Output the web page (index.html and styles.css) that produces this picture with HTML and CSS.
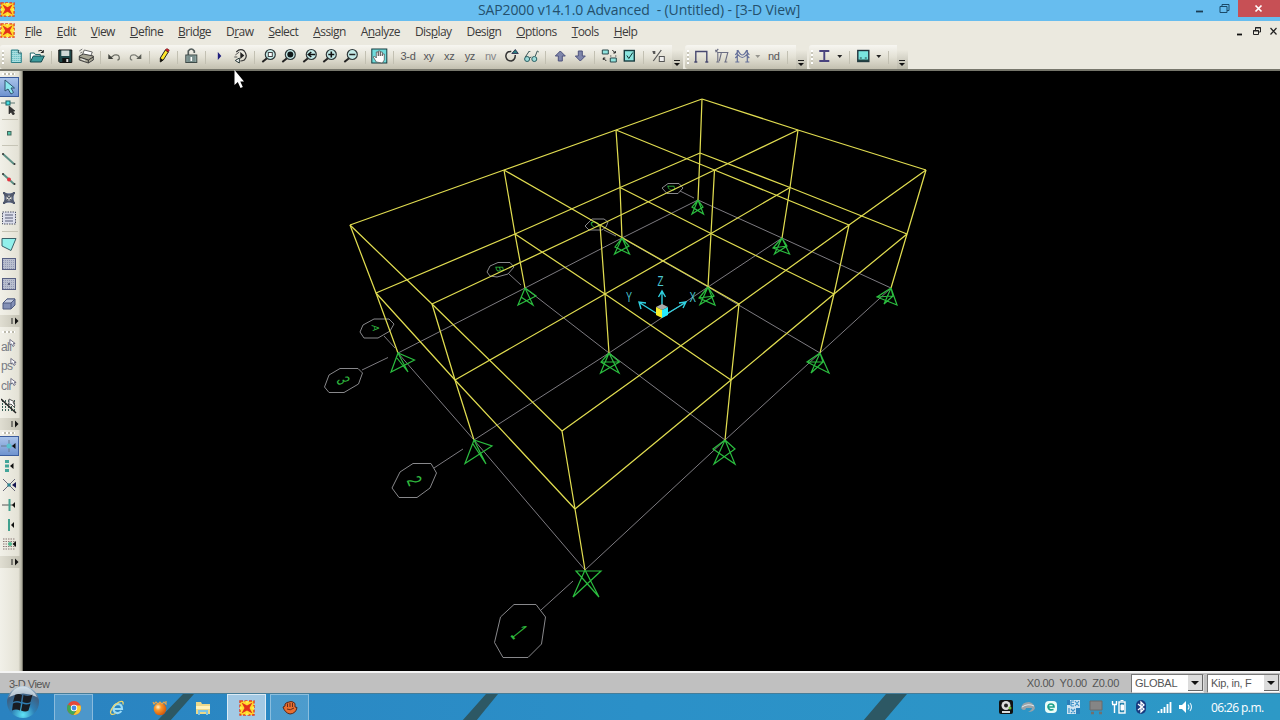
FILE: index.html
```html
<!DOCTYPE html>
<html lang="en">
<head>
    <meta charset="UTF-8">
    <meta name="viewport" content="width=device-width, initial-scale=1.0">
    <title>SAP2000 v14.1.0 Advanced - (Untitled) - [3-D View]</title>
    <link rel="stylesheet" href="styles.css">
</head>
<body>
    <!-- icon sprite -->
    <svg class="sprite" xmlns="http://www.w3.org/2000/svg">
        <defs>
            <pattern id="dots" width="2" height="2" patternUnits="userSpaceOnUse"><rect width="2" height="2" fill="#a9dfe0"/><rect width="1" height="1" fill="#5ab5bb"/></pattern>
            <pattern id="greydots" width="2" height="2" patternUnits="userSpaceOnUse"><rect width="2" height="2" fill="#b9bfce"/><rect width="1" height="1" fill="#9299b4"/></pattern>
            <radialGradient id="orb" cx=".5" cy=".9" r=".9"><stop offset="0" stop-color="#5fe4f7"/><stop offset=".4" stop-color="#2d7fb5"/><stop offset=".75" stop-color="#3f5f80"/><stop offset="1" stop-color="#b9cfdf"/></radialGradient>
            <radialGradient id="ball" cx=".35" cy=".35" r=".7"><stop offset="0" stop-color="#fff3d0"/><stop offset=".35" stop-color="#fb9a2c"/><stop offset="1" stop-color="#d25509"/></radialGradient>
        </defs>
        <symbol id="logo" viewBox="0 0 16 16"><rect x="1" y="1" width="14" height="14" fill="#ffd92e" stroke="#e33c1c" stroke-width="1.4" stroke-dasharray="3 1.5"/><path d="M2.500 2.500l5.500 3 5.500-3-3 5.500 3 5.500-5.500-3-5.500 3 3-5.500z" fill="#e3301a"/><path d="M1 6l3 2-3 2zM15 6l-3 2 3 2zM6 1l2 3 2-3zM6 15l2-3 2 3z" fill="#fff04a"/></symbol>
        <symbol id="new" viewBox="0 0 16 16"><path d="M3 2h7l3 3v9.500H3z" fill="url(#dots)" stroke="#2a8088"/><path d="M10 2v3h3" fill="#fff" stroke="#1a4a50"/></symbol>
        <symbol id="open" viewBox="0 0 16 16"><path d="M1 14V5h4l1 1.500h5V9" fill="#fff" stroke="#23696d"/><path d="M1 14l3-6h11l-3 6z" fill="#3c9a9c" stroke="#15494c"/><path d="M9 3q3-2 5 1m0-2v2.500h-2.500" fill="none" stroke="#222"/></symbol>
        <symbol id="save" viewBox="0 0 16 16"><path d="M1.500 2h13v12.500h-12l-1-1z" fill="#1f4648" stroke="#111"/><path d="M4 2.500h8V8H4z" fill="#cfd8d6"/><path d="M5 10h7v4H5z" fill="#111"/><path d="M9 11h2v3H9z" fill="#ddd"/></symbol>
        <symbol id="print" viewBox="0 0 16 16"><path d="M4 7l2-5 8 2-2 5z" fill="#fff" stroke="#444" stroke-width=".8"/><path d="M1 8l4-2 10 2v4l-5 3-9-3z" fill="#a7a594" stroke="#444"/><path d="M1 9l9 3 5-3M10 12v3" fill="none" stroke="#333"/><path d="M1 3l3-2m-2 4l2-1" stroke="#777"/><path d="M3 11l4 1.500" stroke="#eee"/></symbol>
        <symbol id="undo" viewBox="0 0 16 16"><path d="M4 10l4-3q5-1 5 3 0 2-2 2" fill="none" stroke="#66685f" stroke-width="1.200"/><path d="M2 6v5h5z" fill="#3e403b"/></symbol>
        <symbol id="redo" viewBox="0 0 16 16"><path d="M12 10L8 7Q3 6 3 10q0 2 2 2" fill="none" stroke="#777971" stroke-width="1.200"/><path d="M14 6v5H9z" fill="#5a5c55"/></symbol>
        <symbol id="pencil" viewBox="0 0 16 16"><path d="M5 10l5-8 3 2-5 8-3 2z" fill="#ffe62a" stroke="#222"/><path d="M10 2l1.500-1.500 2.500 1.500-1 2z" fill="#d5202a" stroke="#5e1212" stroke-width=".6"/><path d="M5 10v4l3-2z" fill="#111"/></symbol>
        <symbol id="lock" viewBox="0 0 16 16"><path d="M5 7V3q3-4 6 0v2" fill="none" stroke="#555e5c" stroke-width="1.700"/><rect x="2.500" y="7" width="11" height="7.500" fill="#93aaa7" stroke="#3d4947"/><path d="M4 9h8M4 11h8M4 13h8" stroke="#5e7371"/><path d="M7.200 9h1.600v4H7.200z" fill="#fff"/></symbol>
        <symbol id="run" viewBox="0 0 16 16"><path d="M5.500 4v8l3.500-4z" fill="#20207e"/></symbol>
        <symbol id="anim" viewBox="0 0 16 16"><path d="M4 4q4-4 8-1 4 5 0 9-2 1-4 1" fill="none" stroke="#333" stroke-width="1.200"/><path d="M3 7l4-3M2 9h3" fill="none" stroke="#555"/><path d="M8 4v7l4-3.500z" fill="#222"/><path d="M7 10v5l-4-2.500z" fill="#fff" stroke="#233"/></symbol>
        <symbol id="lens" viewBox="0 0 16 16"><path d="M6 10l-5 4" stroke="#222" stroke-width="2"/><circle cx="9" cy="6.500" r="5" fill="#c3eae8" stroke="#30393a" stroke-width="1.200"/></symbol>
        <symbol id="pan" viewBox="0 0 16 16"><rect x=".5" y="1" width="15" height="14" fill="#6fdcdc" stroke="#163b3f"/><path d="M5 14L2 9l1-1 2 2V4h2v4-5h2v5-4h2v4-2h2v6l-2 3z" fill="#fff" stroke="#555" stroke-width=".8"/></symbol>
        <symbol id="rotate" viewBox="0 0 16 16"><path d="M8 3.500Q3 3 2.500 8q.5 5 5.500 5 4-1 4-6" fill="none" stroke="#333" stroke-width="1.500"/><path d="M8.500 5.500H15L12 1.500z" fill="#2c7d80" stroke="#224" stroke-width=".8"/></symbol>
        <symbol id="glasses" viewBox="0 0 16 16"><circle cx="3.800" cy="11" r="2.500" fill="#9edbd9" stroke="#285e62"/><circle cx="11" cy="11" r="2.500" fill="#9edbd9" stroke="#285e62"/><path d="M6 10l2-1M2 9l4-6 1 1M12 8l2-5 1.500 1" fill="none" stroke="#3c5557"/></symbol>
        <symbol id="up" viewBox="0 0 16 16"><path d="M8 3l5 5h-3v5H6V8H3z" fill="#7f86ab" stroke="#4e537d"/></symbol>
        <symbol id="down" viewBox="0 0 16 16"><path d="M8 13l5-5h-3V3H6v5H3z" fill="#7f86ab" stroke="#4e537d"/></symbol>
        <symbol id="shrink" viewBox="0 0 16 16"><path d="M1 2h6v4H1zM9 10h6v4H9z" fill="#90e4de" stroke="#2b494c"/><path d="M11 2l3 3m0-2v2h-2M5 13l-3-3m0 2v-2h2M9 8h1m4 0h1" fill="none" stroke="#222"/></symbol>
        <symbol id="check" viewBox="0 0 16 16"><rect x="3" y="2.500" width="10" height="10.500" fill="#8be5df" stroke="#173c40" stroke-width="1.400"/><path d="M5.500 7.500l2 3 4-6" fill="none" stroke="#133"/></symbol>
        <symbol id="objopt" viewBox="0 0 16 16"><path d="M3 13L11 2" stroke="#555" stroke-width="1.200"/><path d="M2 3h3v3H3" fill="#555"/><rect x="9" y="8.500" width="5" height="5" fill="#eee" stroke="#555"/></symbol>
        <symbol id="frame" viewBox="0 0 16 16"><path d="M1 14h3M2.500 14V3.500h11V14M12 14h3" fill="none" stroke="#47486f" stroke-width="1.400"/></symbol>
        <symbol id="frame2" viewBox="0 0 16 16"><path d="M2 14h3M3.500 14V4.500h10L11 14M1 2l3 3m0-4L1 4M5 13L7 5M10 14h3" fill="none" stroke="#6c6e83" stroke-width="1.100"/></symbol>
        <symbol id="frame3" viewBox="0 0 16 16"><path d="M3 14V2m10 12V2M1 14h4m6 0h4M1 7l3-4q4 8 8 0l3 4M1 10l3-3q4 5 8 0l3 3" fill="none" stroke="#65709a" stroke-width="1.200"/></symbol>
        <symbol id="ibeam" viewBox="0 0 16 16"><path d="M2 3h10M2 13h10M7 3v10" fill="none" stroke="#49437e" stroke-width="1.900"/></symbol>
        <symbol id="area" viewBox="0 0 16 16"><rect x="1.500" y="2.500" width="11" height="11" fill="#79e4df" stroke="#20323c" stroke-width="1.400"/><path d="M1.500 12.500h11" stroke="#244" stroke-width="2"/><path d="M3.500 10h2M8.500 10h2" stroke="#244"/></symbol>
        <symbol id="drop" viewBox="0 0 8 16"><path d="M1 7h5l-2.500 3z" fill="#222"/></symbol>
        <symbol id="chevron" viewBox="0 0 8 8"><path d="M1 1.500h6" stroke="#222"/><path d="M1 4h6L4 7z" fill="#111"/></symbol>
        <!-- side bar -->
        <symbol id="pointer" viewBox="0 0 16 16"><path d="M4 1v11l3-2 3 5 2.500-1.500L10 9h3.500z" fill="#8be8ee" stroke="#31536f"/></symbol>
        <symbol id="reshape" viewBox="0 0 16 16"><path d="M0 4h14" stroke="#5b7770"/><rect x="5" y="2" width="4" height="4" fill="#47dde0" stroke="#186065"/><path d="M8 7v8l2-2 2 3 1.500-1L12 12h2z" fill="#333" stroke="#222" stroke-width=".6"/></symbol>
        <symbol id="point" viewBox="0 0 16 16"><rect x="6.500" y="6.500" width="3.500" height="3.500" fill="#55c5ad" stroke="#44695d"/></symbol>
        <symbol id="line" viewBox="0 0 16 16"><path d="M2 3l11 10" stroke="#5d8f85" stroke-width="2"/><circle cx="2" cy="3" r="1" fill="#333"/><circle cx="13.500" cy="13" r="1" fill="#333"/></symbol>
        <symbol id="brace" viewBox="0 0 16 16"><path d="M3 3l10 10m0-10L3 13M4 3q4 4 8 0M4 13q4-4 8 0M3 4q4 4 0 8M13 4q-4 4 0 8" fill="#8b96b1" stroke="#50586c" stroke-width="1.300"/><path d="M2 2h2v2H2zM12 2h2v2h-2zM2 12h2v2H2zM12 12h2v2h-2z" fill="#50586c"/></symbol>
        <symbol id="secondary" viewBox="0 0 16 16"><rect x="1.500" y="2" width="13" height="12" fill="#dcdeeb" stroke="#4e5366" stroke-dasharray="1.500 1"/><path d="M4 5h8M4 8h8M4 11h8" stroke="#555b74"/></symbol>
        <symbol id="poly" viewBox="0 0 16 16"><path d="M1 2.500h14l-5 12-9-4.500z" fill="#91f0eb" stroke="#395f68"/></symbol>
        <symbol id="rect" viewBox="0 0 16 16"><rect x="1.500" y="2.500" width="13" height="11" fill="url(#greydots)" stroke="#565e82"/></symbol>
        <symbol id="cube" viewBox="0 0 16 16"><path d="M2 7l4-4h8v6l-4 4H2z" fill="#8390b6" stroke="#4e5a80"/><path d="M2 7l4-4h8l-4 4z" fill="#c2cadf" stroke="#4e5a80"/><path d="M10 7v6" stroke="#4e5a80"/></symbol>
        <symbol id="cursor-sm" viewBox="0 0 8 10"><path d="M1 1v6l2-1 1.500 3L6 8 5 5.500h2z" fill="#fff" stroke="#50506c" stroke-width=".9"/></symbol>
        <symbol id="inter" viewBox="0 0 16 16"><path d="M1.500 2v12M4.500 2v12M7.500 2v12M10.500 2v12M13.500 2v12" stroke="#375f56" stroke-dasharray="2 1"/><path d="M0 1l15 14" stroke="#222" stroke-width="1.500"/><path d="M8 1v6l2-1 3 3 1-1-2-4h2z" fill="#fff" stroke="#555"/></symbol>
        <symbol id="overflow" viewBox="0 0 8 8"><path d="M1 1v6" stroke="#222"/><path d="M4 .5l3.500 3.500L4 7.500z" fill="#111"/></symbol>
    </svg>

    <header class="titlebar">
        <svg class="app-icon"><use href="#logo"/></svg>
        <span class="title">SAP2000 v14.1.0 Advanced &nbsp;- (Untitled) - [3-D View]</span>
        <div class="window-buttons">
            <svg width="12" height="12"><path d="M1 8.500h7" stroke="#1b3d55" stroke-width="1.800"/></svg>
            <svg width="12" height="12"><path d="M1 3.500h7v6H1zM3 3.500v-2h7v6H8" fill="none" stroke="#1b4a68"/></svg>
            <span class="close"><svg width="10" height="10"><path d="M1.500 1.500l6 6m0-6l-6 6" stroke="#fff" stroke-width="1.700"/></svg></span>
        </div>
    </header>

    <nav class="menubar">
        <svg class="app-icon"><use href="#logo"/></svg>
        <span class="menu"><u>F</u>ile</span>
        <span class="menu"><u>E</u>dit</span>
        <span class="menu"><u>V</u>iew</span>
        <span class="menu"><u>D</u>efine</span>
        <span class="menu"><u>B</u>ridge</span>
        <span class="menu">D<u>r</u>aw</span>
        <span class="menu"><u>S</u>elect</span>
        <span class="menu"><u>A</u>ssign</span>
        <span class="menu">A<u>n</u>alyze</span>
        <span class="menu">Dis<u>p</u>lay</span>
        <span class="menu">Desi<u>g</u>n</span>
        <span class="menu"><u>O</u>ptions</span>
        <span class="menu"><u>T</u>ools</span>
        <span class="menu"><u>H</u>elp</span>
        <div class="mdi-buttons">
            <svg width="10" height="10"><path d="M2 8.500h5" stroke="#111" stroke-width="1.800"/></svg>
            <svg width="10" height="10"><path d="M1.500 4.500h5v4h-5zM3.500 4V1.500h5V6H7M3 2h6M1 5h6" fill="none" stroke="#222"/></svg>
            <svg width="10" height="10"><path d="M1.500 2l6 6.500m0-6.500l-6 6.500" stroke="#222" stroke-width="1.200"/></svg>
        </div>
    </nav>

    <div class="toolbars">
        <div class="toolbar">
            <i class="grip"></i>
            <svg class="tool"><use href="#new"/></svg>
            <svg class="tool"><use href="#open"/></svg>
            <i class="sep"></i>
            <svg class="tool"><use href="#save"/></svg>
            <svg class="tool"><use href="#print"/></svg>
            <i class="sep"></i>
            <svg class="tool"><use href="#undo"/></svg>
            <svg class="tool"><use href="#redo"/></svg>
            <i class="sep"></i>
            <svg class="tool"><use href="#pencil"/></svg>
            <i class="sep"></i>
            <svg class="tool"><use href="#lock"/></svg>
            <i class="sep"></i>
            <svg class="tool"><use href="#run"/></svg>
            <svg class="tool"><use href="#anim"/></svg>
            <i class="sep"></i>
            <svg class="tool" viewBox="0 0 16 16"><use href="#lens"/><rect x="7" y="4.500" width="4" height="4" fill="#fff" stroke="#444"/></svg>
            <svg class="tool" viewBox="0 0 16 16"><use href="#lens"/><circle cx="9" cy="6.500" r="3" fill="#101818"/></svg>
            <svg class="tool" viewBox="0 0 16 16"><use href="#lens"/><path d="M6 6.500h7M9 4L6 6.500 9 9" fill="none" stroke="#111" stroke-width="1.500"/></svg>
            <svg class="tool" viewBox="0 0 16 16"><use href="#lens"/><path d="M6 6.500h6M9 3.500v6" stroke="#111" stroke-width="1.600"/></svg>
            <svg class="tool" viewBox="0 0 16 16"><use href="#lens"/><path d="M6 6.500h6" stroke="#222" stroke-width="1.500"/></svg>
            <i class="sep"></i>
            <svg class="tool"><use href="#pan"/></svg>
            <i class="sep"></i>
            <span class="tool">3-d</span>
            <span class="tool">xy</span>
            <span class="tool">xz</span>
            <span class="tool">yz</span>
            <span class="tool dim">nv</span>
            <svg class="tool"><use href="#rotate"/></svg>
            <svg class="tool"><use href="#glasses"/></svg>
            <i class="sep"></i>
            <svg class="tool"><use href="#up"/></svg>
            <svg class="tool"><use href="#down"/></svg>
            <i class="sep"></i>
            <svg class="tool"><use href="#shrink"/></svg>
            <svg class="tool"><use href="#check"/></svg>
            <i class="sep"></i>
            <svg class="tool"><use href="#objopt"/></svg>
            <span class="more"><svg><use href="#chevron"/></svg></span>
        </div>
        <div class="toolbar">
            <i class="grip"></i>
            <svg class="tool"><use href="#frame"/></svg>
            <svg class="tool"><use href="#frame2"/></svg>
            <svg class="tool"><use href="#frame3"/></svg>
            <svg class="drop off"><use href="#drop"/></svg>
            <span class="tool">nd</span>
            <i class="sep"></i>
            <span class="more"><svg><use href="#chevron"/></svg></span>
        </div>
        <div class="toolbar">
            <i class="grip"></i>
            <svg class="tool"><use href="#ibeam"/></svg>
            <svg class="drop"><use href="#drop"/></svg>
            <i class="sep"></i>
            <svg class="tool"><use href="#area"/></svg>
            <svg class="drop"><use href="#drop"/></svg>
            <i class="sep"></i>
            <span class="more"><svg><use href="#chevron"/></svg></span>
        </div>
    </div>

    <main class="workspace">
        <aside class="sidebar">
            <div class="side-group">
                <i class="hgrip"></i>
                <span class="side on"><svg><use href="#pointer"/></svg></span>
                <span class="side"><svg><use href="#reshape"/></svg></span>
                <i class="hsep"></i>
                <span class="side"><svg><use href="#point"/></svg></span>
                <i class="hsep"></i>
                <span class="side"><svg><use href="#line"/></svg></span>
                <span class="side"><svg viewBox="0 0 16 16"><use href="#line"/><circle cx="8" cy="8.500" r="2" fill="#e2333f"/></svg></span>
                <span class="side"><svg><use href="#brace"/></svg></span>
                <span class="side"><svg><use href="#secondary"/></svg></span>
                <i class="hsep"></i>
                <span class="side"><svg><use href="#poly"/></svg></span>
                <span class="side"><svg><use href="#rect"/></svg></span>
                <span class="side"><svg viewBox="0 0 16 16"><use href="#rect"/><path d="M7 8h2" stroke="#444a6a" stroke-width="1.500"/></svg></span>
                <span class="side"><svg><use href="#cube"/></svg></span>
                <span class="side-more"><svg><use href="#overflow"/></svg></span>
            </div>
            <div class="side-group select-group">
                <i class="hgrip"></i>
                <span class="side word">all<svg class="mini"><use href="#cursor-sm"/></svg></span>
                <span class="side word">ps<svg class="mini"><use href="#cursor-sm"/></svg></span>
                <span class="side word">clr<svg class="mini"><use href="#cursor-sm"/></svg></span>
                <span class="side"><svg><use href="#inter"/></svg></span>
                <span class="side-more"><svg><use href="#overflow"/></svg></span>
            </div>
            <div class="side-group snap-group">
                <i class="hgrip"></i>
                <span class="side on"><svg viewBox="0 0 16 16"><path d="M0 8h14M8 2v12" stroke="#667b8e"/><circle cx="8" cy="8" r="2.500" fill="#58c3cf"/><path d="M14.500 5v6L11 8z" fill="#111"/></svg></span>
                <span class="side"><svg viewBox="0 0 16 16"><path d="M6 2v12" stroke="#42a59a" stroke-width="4" stroke-dasharray="3 1.500"/><path d="M12.500 5v6L9 8z" fill="#111"/></svg></span>
                <span class="side"><svg viewBox="0 0 16 16"><path d="M2 2l12 12M2 14L14 2" stroke="#667"/><circle cx="8" cy="8" r="1.800" fill="#2f8592"/><path d="M15 5v6l-4-3z" fill="#151550"/></svg></span>
                <span class="side"><svg viewBox="0 0 16 16"><path d="M1 8h13" stroke="#555"/><path d="M8.500 2v12" stroke="#42a08e" stroke-width="2"/><path d="M14 5v6l-3-3z" fill="#111"/></svg></span>
                <span class="side"><svg viewBox="0 0 16 16"><path d="M8 2v12" stroke="#42a08e" stroke-width="2"/><path d="M13 5v6l-3-3z" fill="#111"/></svg></span>
                <span class="side"><svg viewBox="0 0 16 16"><path d="M2 3h12M2 5.500h12M2 8h12M2 10.500h12M2 13h12" stroke="#8b7876" stroke-dasharray="1.500 1"/><circle cx="9" cy="8" r="2" fill="#51b890"/><path d="M15 5v6l-3.500-3z" fill="#111"/></svg></span>
                <span class="side-more"><svg><use href="#overflow"/></svg></span>
            </div>
        </aside>

        <svg class="view3d" viewBox="23 71 1257 600" width="1257" height="600">
            <!-- ground grid -->
            <g class="grid">
                <path d="M398 353L525 288 622 238 698 200M474 440L609 353 708 287 782 238M585 570L725 440 820 353 891 288"/>
                <path d="M398 353L474 440 585 570M525 288L609 353 725 440M622 238L708 287 820 353M698 200L782 238 891 288"/>
                <path d="M541 610L573 581M434 468L463 449M362 370L388 357.500M384 336L395 348M509 274L521 285M604 230L616 236M680 191L694 198"/>
            </g>
            <!-- grid bubbles -->
            <g class="bubbles">
                <path d="M514 604.500H536L545.500 617 541.500 644 528 657.500H503L494.500 642.500 500.500 617z"/>
                <path d="M413 463.500H431L436.500 473 430 488 417 497.500H399L392 488 400 472z"/>
                <path d="M340 368.500H358L362.500 373 358.500 384 344 392.500H329L324.500 387 329 375z"/>
                <path d="M374 319H389L394 324 390 331 378 338H364L360 332 363 325z"/>
                <path d="M498 262.500H510L514 267 508 274 497 277 490 276 487 272 490 266z"/>
                <path d="M592 219H604L608 222 606 227 602 230H589L585 226z"/>
                <path d="M668 183.500H679L683 188 678 193.500H667L662 188z"/>
            </g>
            <g class="labels">
                <text transform="matrix(.7 .85 -2.100 1.700 510 635.500)">1</text>
                <text transform="matrix(.5 1.200 -1.900 .9 406.500 480.500)">2</text>
                <text transform="matrix(.5 1 -1.700 .8 336 380.500)">3</text>
                <text transform="matrix(.2 .9 -1 0 371.500 325)">A</text>
                <text transform="matrix(.3 .9 -1.100 0 495 266)">B</text>
                <text transform="matrix(.3 .9 -1.100 0 590 221)">C</text>
                <text transform="matrix(.3 .8 -1 0 667 185)">D</text>
            </g>
            <!-- frame members -->
            <g class="members">
                <path d="M350 225L504 170 616 130 702 99M432 304L600 225 714.500 170 798 130M562 431L739 304 849 225 926 170"/>
                <path d="M350 225L432 304 562 431M504 170L600 225 739 304M616 130L714.500 170 849 225M702 99L798 130 926 170"/>
                <path d="M376 293L515 234 620 187.500 700 153M455 380L605 294 711 233.500 790 187.500M575 509L731 380 834 294 907 234"/>
                <path d="M376 293L455 380 575 509M515 234L605 294 731 380M620 187.500L711 233.500 834 294M700 153L790 187.500 907 234"/>
                <path d="M350 225L376 293 398 353M504 170L515 234 525 288M616 130L620 187.500 622 238M702 99L700 153 698 200"/>
                <path d="M432 304L455 380 474 440M600 225L605 294 609 353M714.500 170L711 233.500 708 287M798 130L790 187.500 782 238"/>
                <path d="M562 431L575 509 585 570M739 304L731 380 725 440M849 225L834 294 820 353M926 170L907 234 891 288"/>
            </g>
            <!-- restraints -->
            <g class="supports">
                <path d="M585 570L573 597 601 571H576L599 597 585 570"/>
                <path d="M474 440L465 463.500 492 446 474 440 486 464 473 444"/>
                <path d="M725 440L714 464 735 449 725 440 735 464 713 449 725 440"/>
                <path d="M398 353L391 372 414.500 360 398 353 408 372 397 358"/>
                <path d="M609 353L600.500 373 619.500 362 609 353 619 373 601 362 609 353M601 362H619"/>
                <path d="M820 353L811 373 823 362 820 353 829 373 807 362 820 353M807 362H823"/>
                <path d="M525 288L518 305 536 296 525 288 533 305 521 297"/>
                <path d="M708 287L700 304.500 714 296 708 287 715 305 699 298 708 287M699 298L714 296"/>
                <path d="M891 288L884 304 893 296 891 288 897 305 877 297 891 288M877 297L893 296"/>
                <path d="M622 238L614.500 254 629 246 622 238 629.500 254 615 247 622 238"/>
                <path d="M782 238L774.500 254 787 246 782 238 789.500 254 773 248 782 238M773 248L787 246"/>
                <path d="M698 200L692 214 703 207 698 200 703.500 214 692 207z"/>
            </g>
            <!-- axis triad -->
            <g class="axes">
                <path d="M662 305V292M658.500 297L662 291 665.500 297M656 313L640 303M641 309L639 302 646 303M668 313L685 303M679 303L686 302 683 308"/>
                <path d="M656 307L662 304 668 307 662 310z" fill="#aaa" stroke="none"/>
                <path d="M656 307L662 310V318L656 315z" fill="#f8ef2b" stroke="none"/>
                <path d="M668 307L662 310V318L668 315z" fill="#27eafa" stroke="none"/>
                <text x="657.500" y="286" textLength="6" lengthAdjust="spacingAndGlyphs">Z</text>
                <text x="626" y="302" textLength="6" lengthAdjust="spacingAndGlyphs">Y</text>
                <text x="689.500" y="302" textLength="6.500" lengthAdjust="spacingAndGlyphs">X</text>
            </g>
        </svg>
    </main>

    <footer class="statusbar">
        <span class="view-name">3-D View</span>
        <span class="coords">X0.00 &nbsp;Y0.00 &nbsp;Z0.00</span>
        <span class="combo">GLOBAL<b><svg width="8" height="6"><path d="M0 1h8L4 5z" fill="#111"/></svg></b></span>
        <span class="combo">Kip, in, F<b><svg width="8" height="6"><path d="M0 1h8L4 5z" fill="#111"/></svg></b></span>
    </footer>

    <div class="taskbar">
        <svg class="streaks" viewBox="0 0 1280 27"><path d="M183 0h11l-24 27h-13zM486 0h12l-22 27h-14zM886 0h21l-23 27h-21z"/></svg>
        <svg class="start" viewBox="0 0 34 34"><circle cx="17" cy="17" r="16" fill="url(#orb)"/><path d="M3 12Q8 1 17 1.500T31 12Q17 5 3 12z" fill="#dfe8ee" opacity=".75"/><path d="M9 10q4-2 7 0l-1 7q-4-2-8 0zM17.500 10q5 2 9-.5l-2 7.500q-3 2-8 0zM7 18.500q4-2 8 0l-1 7q-4-2-8 0zM16.500 18.500q4 2 8 0l-2 7q-3 2-7.500 0z" fill="#181c22"/></svg>
        <div class="apps">
            <span class="task open"><svg viewBox="0 0 16 16"><circle cx="8" cy="8" r="7" fill="#e4473a"/><path d="M8 8L2 4.500A7 7 0 0 0 7.500 15L10 11z" fill="#3fa756"/><path d="M8 8l2.500 3-3 4A7 7 0 0 0 14.500 5.500H8z" fill="#f6cd34"/><circle cx="8" cy="8" r="3.200" fill="#fff"/><circle cx="8" cy="8" r="2.400" fill="#4688e8"/></svg></span>
            <span class="task"><svg viewBox="0 0 16 16"><path d="M4.500 9h8.500Q13 4 8.800 4 4.500 4.500 4.300 9q1 4.500 5 4 2-.5 3-2" fill="none" stroke="#9cdcf7" stroke-width="2.200"/><path d="M14 4.500Q15 0 10 2 3 6 1.500 12q0 4 5 1.500" fill="none" stroke="#f1d76a" stroke-width="1.300"/></svg></span>
            <span class="task"><svg viewBox="0 0 16 16"><circle cx="8" cy="9" r="6.300" fill="url(#ball)"/><path d="M1 2l1 2 2-2 2 2 2-2 2 2 2-2 2 2V1" fill="none" stroke="#e9a44a" stroke-width="1.200"/></svg></span>
            <span class="task"><svg viewBox="0 0 16 16"><path d="M1 2h5l1 2h8v10H1z" fill="#ecd88a"/><path d="M1 6h14v3H1z" fill="#fff3bd"/><path d="M3 15v-5h10v5h-2v-3H5v3z" fill="#7cc4e8"/></svg></span>
            <span class="task active"><svg><use href="#logo"/></svg></span>
            <span class="task open"><svg viewBox="0 0 16 16"><path d="M1 7l2-1V4l2-1.500L7 2l2-.5L11 2l2 1.500V7l2 .5q-1 6-7 6.500-5-1-7-7z" fill="#e96f31" stroke="#56281c"/><path d="M5.500 3.500V7M8 3v4M10.500 3v4M5 9q3 2 7-1" fill="none" stroke="#672d1b"/></svg></span>
        </div>
        <div class="tray">
            <svg viewBox="0 0 16 16"><rect x="1" y="1" width="14" height="14" rx="2" fill="#111"/><circle cx="8" cy="6.500" r="4.500" fill="#ddd"/><circle cx="8" cy="6.500" r="2" fill="#222"/><path d="M4 13h8" stroke="#ddd" stroke-width="2"/><circle cx="12" cy="9" r="1.500" fill="#6bbb32"/></svg>
            <svg viewBox="0 0 16 16"><path d="M1 9q1-6 8-6 5 1 6 6-1 4-7 4 4-2 4-4H6q0 2-2 2-2 0-3-2z" fill="#9aa3a8"/><path d="M2 8q6-4 12-1" fill="none" stroke="#e2e7ea"/></svg>
            <svg viewBox="0 0 16 16"><rect x="2" y="2" width="12" height="12" rx="4" fill="#eafcf8"/><path d="M5 8h6q0-3-3-3T5 8q1 4 5.500 2.500" fill="none" stroke="#1ca18a" stroke-width="1.700"/></svg>
            <svg viewBox="0 0 16 16"><rect x="2" y="1" width="13" height="14" fill="#cfe4f1"/><path d="M2 1h3v5H2zM11 9h4v6h-4z" fill="#2b7fb9"/><path d="M6 2h3M6 4.500h3M6 7h3M6 2v5M10 2l4 5m0-5l-4 5M4 9v5M6 10l4 4m0-4l-4 4" stroke="#3e92c8" stroke-width="1.200"/></svg>
            <svg viewBox="0 0 16 16"><path d="M2 2h12v9H2z" fill="#858585" stroke="#6a6a6a"/><path d="M3 14h3m5 0h3" stroke="#707070" stroke-width="2.500"/></svg>
            <svg viewBox="0 0 16 16"><path d="M3.500 6v8M1.500 2v3M5.500 2v3M1 5.500h5" fill="none" stroke="#fff" stroke-width="1.400"/><rect x="8" y="3" width="6" height="11" fill="#2583ac" stroke="#fff" stroke-width="1.400"/><path d="M9.500 1.500h3M10 6h2.500v5H10z" fill="#fff" stroke="#fff"/></svg>
            <svg viewBox="0 0 16 16"><rect x="3" y="1" width="10" height="14" rx="5" fill="#173b80"/><path d="M5 5l6 5-3 3V3l3 3-6 5" fill="none" stroke="#fff" stroke-width="1.300"/></svg>
            <svg viewBox="0 0 16 16"><path d="M2.500 14v-2M5.500 14v-4M8.500 14V8M11.500 14V5M14.500 14V3" stroke="#fff" stroke-width="1.800"/></svg>
            <svg viewBox="0 0 16 16"><path d="M1 6h3l4-4v12l-4-4H1z" fill="#fff"/><path d="M10 5.500q2 2.500 0 5M12 4q3 4 0 8" fill="none" stroke="#e7f4fb" stroke-width="1.100"/></svg>
            <span class="clock">06:26 p.m.</span>
        </div>
    </div>

    <svg class="mouse" viewBox="0 0 10 18"><path d="M.5 0v15l3.300-3 2.700 6 2.300-1-2.500-5.500H10z" fill="#fff"/></svg>
</body>
</html>
```
FILE: styles.css
```css
* {
    box-sizing: border-box;
}
body {
    margin: 0;
    width: 1280px;
    height: 720px;
    overflow: hidden;
    position: relative;
    display: flex;
    flex-direction: column;
    background: #000;
    font-family: "Open Sans", "Noto Sans", sans-serif;
    color: #3b3b3b;
}
svg {
    display: block;
    flex-shrink: 0;
}
.sprite {
    position: absolute;
    width: 0;
    height: 0;
}
.app-icon {
    width: 15px;
    height: 15px;
}

/* title bar */
.titlebar {
    height: 21px;
    display: grid;
    grid-template-columns: 478px 1fr auto;
    align-items: center;
    background: #67bdef;
}
.titlebar .app-icon {
    margin-top: -2px;
}
.title {
    font-size: 14px;
    line-height: 19px;
    margin-top: -2px;
    letter-spacing: -0.12px;
    color: #24506c;
    white-space: nowrap;
}
.window-buttons {
    display: flex;
    align-items: center;
    align-self: start;
    height: 17px;
    gap: 12px;
}
.close {
    width: 42px;
    height: 17px;
    margin-left: -5px;
    display: flex;
    align-items: center;
    justify-content: center;
    background: #c75055;
}

/* menu */
.menubar {
    height: 23px;
    display: flex;
    align-items: center;
    background: #ebe9df;
    font-size: 12px;
    letter-spacing: -0.56px;
}
.menubar .app-icon {
    margin-right: 10px;
    margin-top: -5px;
}
.menu {
    margin-right: 15px;
    margin-top: -3px;
    white-space: nowrap;
}
.menu u {
    text-underline-offset: 1px;
}
.mdi-buttons {
    display: flex;
    gap: 7px;
    margin-left: auto;
    margin-right: 1px;
    margin-top: -4px;
}

/* toolbars */
.toolbars {
    height: 27px;
    display: flex;
    gap: 2px;
    padding-top: 1px;
    background: #ebe9df;
    border-bottom: 2px solid #77776c;
}
.toolbar {
    height: 24px;
    display: flex;
    align-items: center;
    background: linear-gradient(#f7f6f1, #e3e1d5 50%, #c3c0b0);
    border-radius: 3px 0 0 3px;
}
.toolbar > * {
    margin-bottom: 2px;
}
.grip {
    width: 2px;
    height: 15px;
    margin: 0 2px;
    background: repeating-linear-gradient(#fff 0 2px, #c9c7ba 2px 4px);
}
.tool {
    width: 20.6px;
    height: 16px;
    flex-shrink: 0;
    font: 11px/16px "Liberation Sans", sans-serif;
    letter-spacing: -0.3px;
    text-align: center;
    color: #55565a;
}
.dim {
    color: #85868a;
}
.sep {
    width: 1px;
    height: 13px;
    margin: 0 3.4px;
    background: #c2c0b2;
}
.drop {
    width: 10.500px;
    height: 16px;
}
.off {
    opacity: .4;
}
.more {
    width: 11px;
    height: 24px;
    margin: 0 0 0 4px;
    padding: 14px 0 0 1px;
    background: linear-gradient(#ebe9df 20%, #bab8a9);
}
.more svg {
    width: 8px;
    height: 8px;
}

/* workspace */
.workspace {
    height: 600px;
    display: flex;
}
.sidebar {
    width: 23px;
    background: linear-gradient(90deg, #f1f0e8, #e4e2d6 80%, #a9a798 95%, #4d4d45);
}
.side-group {
    display: flex;
    flex-direction: column;
    width: 20px;
}
.hgrip {
    width: 13px;
    height: 2px;
    margin: 2px 2px 2px;
    background: repeating-linear-gradient(90deg, #fff 0 2px, #bdbbae 2px 4px);
}
.select-group .hgrip {
    margin: 4px 2px 3.500px;
}
.snap-group .hgrip {
    margin-bottom: 2.500px;
}
.side {
    height: 19.7px;
    width: 19px;
    display: flex;
    align-items: center;
    padding-left: 1px;
}
.side svg {
    width: 16px;
    height: 16px;
}
.on {
    background: linear-gradient(#a9c3ea, #6f93cf);
    border: 1px solid #3b5c9c;
    border-left: 0;
}
.hsep {
    height: 1px;
    margin: 2.800px 2px;
    background: #c6c4b6;
}
.word {
    font: 12px "Liberation Sans", sans-serif;
    letter-spacing: -0.6px;
    color: #777b84;
}
.side .mini {
    width: 7px;
    height: 10px;
    margin: -8px 0 0 -2px;
}
.side-more {
    height: 12px;
    width: 20px;
    margin-top: 2px;
    padding: 2px 0 0 11px;
    background: linear-gradient(90deg, #e0ded2, #c3c1b3);
}
.side-more svg {
    width: 8px;
    height: 8px;
}

/* 3-D model */
.view3d {
    background: #000;
    fill: none;
    stroke-width: 1;
}
.grid {
    stroke: #7d7b80;
}
.bubbles {
    stroke: #88888b;
}
.members {
    stroke: #e0dc50;
    stroke-width: 1.25;
}
.supports {
    stroke: #2bbd3f;
    stroke-width: 1.2;
}
.labels {
    fill: #2fb83e;
    font: 10px "Liberation Sans", sans-serif;
}
.axes {
    stroke: #2fd0e0;
    stroke-width: 1.4;
}
.axes text {
    fill: #4cc6d2;
    stroke: none;
    font: 14px "Liberation Sans", sans-serif;
}

/* status bar */
.statusbar {
    height: 22px;
    display: flex;
    align-items: center;
    gap: 3px;
    padding-left: 9px;
    background: #c0c0c0;
    border-top: 2px solid #f4f4f4;
    font: 11px "Liberation Sans", sans-serif;
    letter-spacing: -0.3px;
    color: #555;
}
.view-name {
    letter-spacing: -0.5px;
    padding-top: 2px;
}
.coords {
    margin-left: auto;
    margin-right: 9px;
    white-space: nowrap;
}
.combo {
    width: 73px;
    height: 19px;
    display: flex;
    align-items: center;
    justify-content: space-between;
    padding-left: 3px;
    background: #fff;
    border: 1px solid #777;
    border-right-color: #ddd;
    border-bottom-color: #ddd;
}
.combo b {
    width: 15px;
    height: 16px;
    display: flex;
    align-items: center;
    justify-content: center;
    background: #dcdcdc;
    border-right: 1px solid #666;
    border-bottom: 1px solid #666;
}

/* taskbar */
.taskbar {
    height: 27px;
    position: relative;
    display: flex;
    justify-content: space-between;
    background: linear-gradient(90deg, #2a82c0, #2b90c8 50%, #2d99c6);
    border-top: 1px solid #477d98;
}
.streaks {
    position: absolute;
    inset: 0;
    width: 1280px;
    height: 27px;
    fill: #2d5864;
}
.start {
    position: absolute;
    left: 6px;
    top: -9px;
    width: 34px;
    height: 34px;
}
.apps {
    display: flex;
    gap: 4.3px;
    padding-left: 54px;
    position: relative;
}
.task {
    width: 39px;
    height: 27px;
    display: flex;
    align-items: center;
    justify-content: center;
    border: 1px solid transparent;
    border-bottom: 0;
}
.task svg {
    width: 16px;
    height: 16px;
}
.open {
    background: rgba(255, 255, 255, .16);
    border-color: rgba(255, 255, 255, .35);
}
.active {
    background: #a3c9e4;
    border-color: #dcebf5;
}
.tray {
    position: relative;
    display: flex;
    align-items: center;
    gap: 6.6px;
    padding-right: 17px;
}
.tray svg {
    width: 16px;
    height: 16px;
}
.clock {
    margin-left: 10px;
    width: 52px;
    font-size: 12px;
    letter-spacing: -0.6px;
    color: #fff;
    white-space: nowrap;
}

.mouse {
    position: absolute;
    left: 234px;
    top: 70px;
    width: 10px;
    height: 18px;
}
```
